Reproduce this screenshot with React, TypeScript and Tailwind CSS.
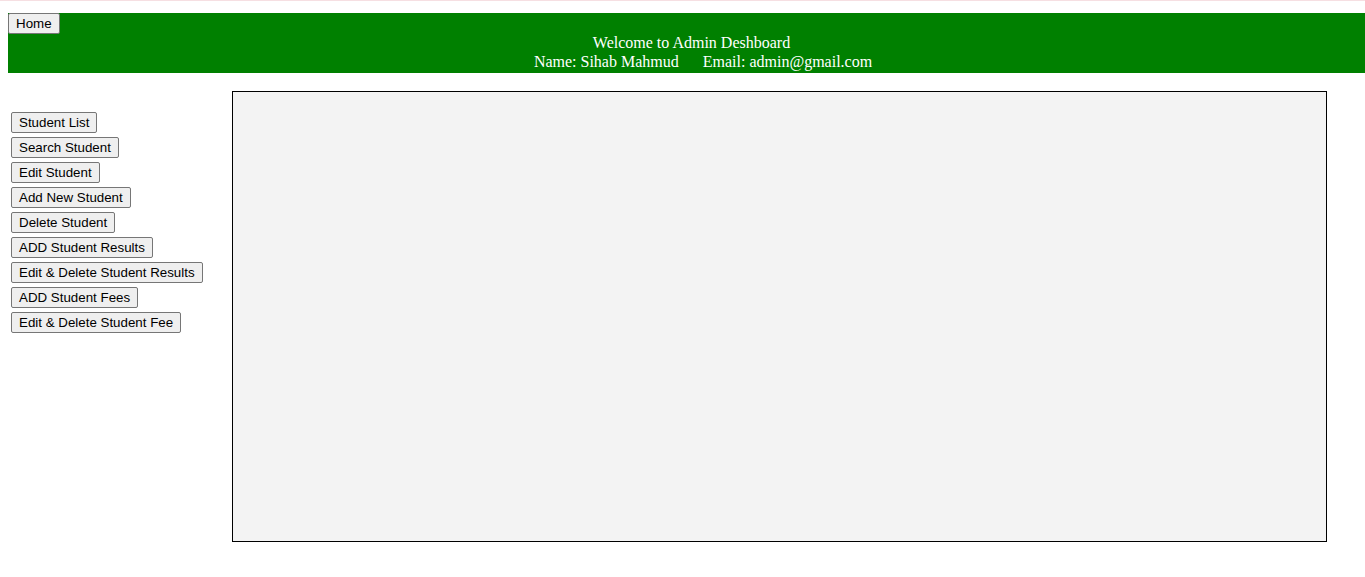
const MENU = [
  'Student List',
  'Search Student',
  'Edit Student',
  'Add New Student',
  'Delete Student',
  'ADD Student Results',
  'Edit & Delete Student Results',
  'ADD Student Fees',
  'Edit & Delete Student Fee',
];

const btn =
  "h-[21px] rounded-[2px] border border-[#767676] bg-[#efefef] px-[7px] font-['Liberation_Sans',Arial,sans-serif] text-[13.333px] leading-none text-black hover:bg-[#e5e5e5]";

export default function App() {
  return (
    <div className="h-[577px] w-full overflow-hidden bg-white">
      <div className="h-px w-full bg-[#f6dfe2]" />

      {/* Header */}
      <header className="mt-[12px] ml-2 h-[60px] w-[1367px] bg-[#008000] font-['Liberation_Serif','Times_New_Roman',serif] text-[16px] leading-[18.5px] text-white">
        <button className={btn}>Home</button>
        <div className="text-center">Welcome to Admin Deshboard</div>
        <div className="pl-[23px] text-center">
          <span>Name: Sihab Mahmud</span>
          <span className="ml-[24px]">Email: admin@gmail.com</span>
        </div>
      </header>

      <div className="mt-[18px] flex">
        {/* Sidebar */}
        <nav className="flex w-[232px] flex-col items-start gap-[4px] pt-[21px] pl-[11px]">
          {MENU.map((item) => (
            <button key={item} className={btn}>
              {item}
            </button>
          ))}
        </nav>

        {/* Content */}
        <div className="h-[451px] w-[1095px] border border-black bg-[#f3f3f3]" />
      </div>
    </div>
  );
}
